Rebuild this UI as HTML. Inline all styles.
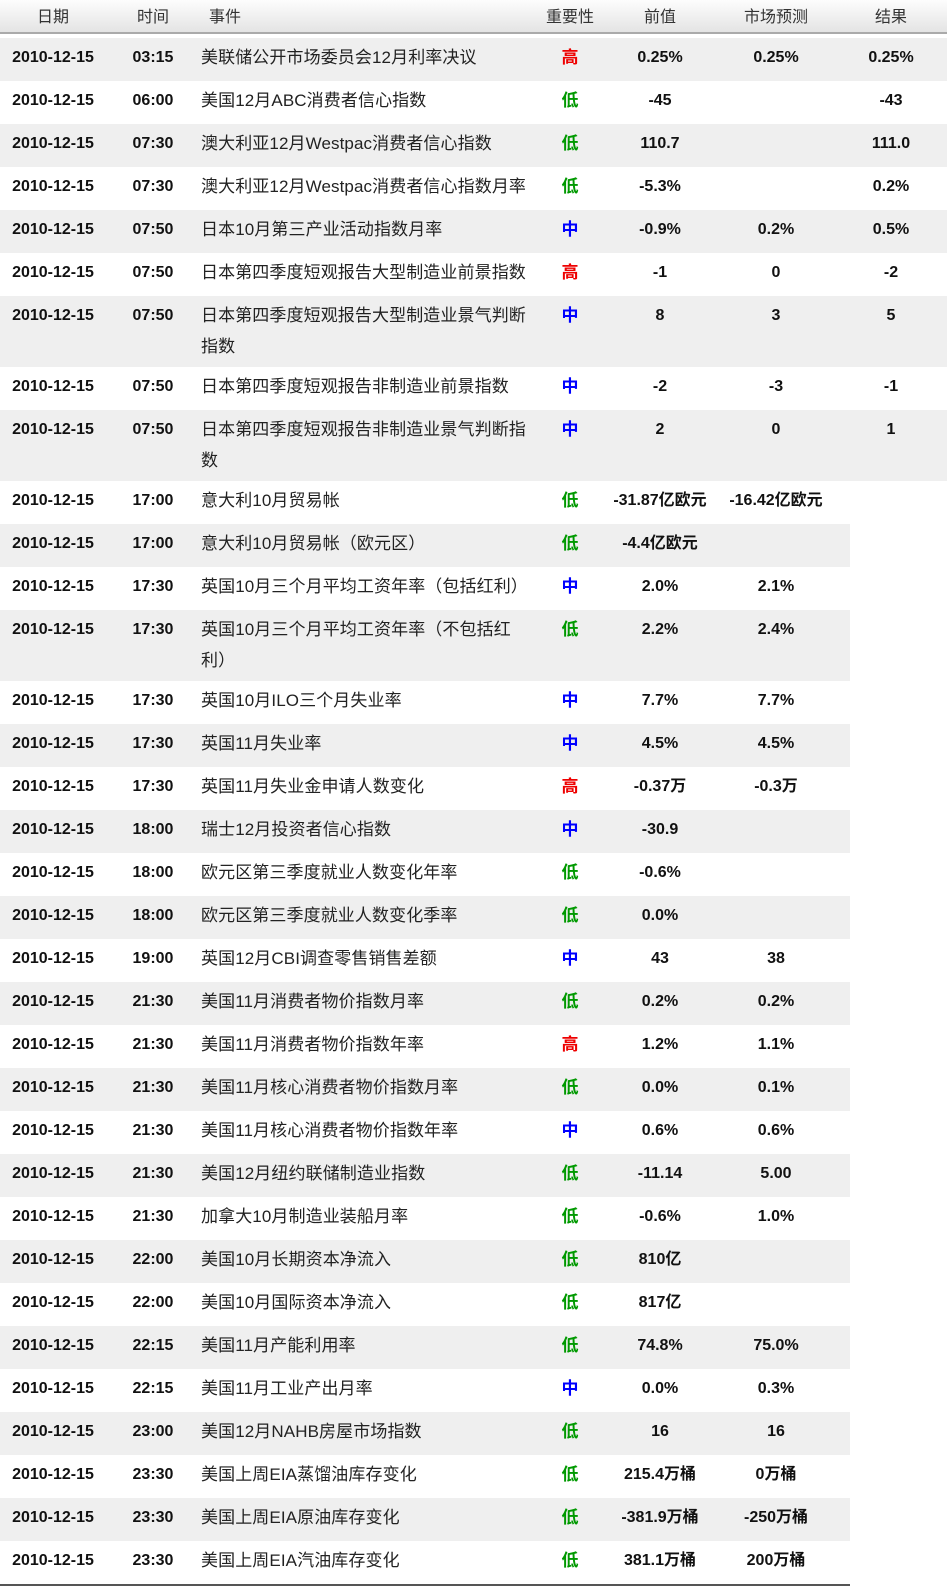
<!DOCTYPE html>
<html><head><meta charset="utf-8">
<style>
*{margin:0;padding:0;box-sizing:border-box}
body{width:947px;height:1586px;background:#fff;font-family:"Liberation Sans","Noto Sans CJK SC",sans-serif;color:#111;position:relative;overflow:hidden}
.hd{position:absolute;left:0;top:0;width:947px;height:34px;background:linear-gradient(#fdfdfd,#e4e4e4);border-bottom:2px solid #aaa;font-size:16px;color:#333}
.hd span{position:absolute;top:3px;transform:translateX(-50%);white-space:nowrap}
.r{position:absolute;left:0;width:947px;height:43px;font-size:16px}
.r.n{width:850px}
.r.g{background:#efefef}
.r.w{height:71px}
.c{position:absolute;top:4px;line-height:31px;white-space:nowrap;font-weight:bold}
.d{left:0;width:106px;text-align:center}
.t{left:106px;width:94px;text-align:center}
.e{left:201px;font-weight:normal;font-size:17px;letter-spacing:0.1px;color:#222}
.i{left:532px;width:76px;text-align:center;font-size:17px}
.p{left:608px;width:104px;text-align:center}
.f{left:712px;width:128px;text-align:center}
.s{left:840px;width:102px;text-align:center}
.H{color:#e00}.M{color:#00f}.L{color:#090}
.bl{position:absolute;left:0;top:1584px;width:850px;height:2px;background:#555}
</style></head><body>
<div class="hd">
<span style="left:53px">日期</span><span style="left:153px">时间</span><span style="left:225px">事件</span><span style="left:570px">重要性</span><span style="left:660px">前值</span><span style="left:776px">市场预测</span><span style="left:891px">结果</span>
</div>
<div class="r g" style="top:38px"><div class="c d">2010-12-15</div><div class="c t">03:15</div><div class="c e">美联储公开市场委员会12月利率决议</div><div class="c i H">高</div><div class="c p">0.25%</div><div class="c f">0.25%</div><div class="c s">0.25%</div></div>
<div class="r" style="top:81px"><div class="c d">2010-12-15</div><div class="c t">06:00</div><div class="c e">美国12月ABC消费者信心指数</div><div class="c i L">低</div><div class="c p">-45</div><div class="c f"></div><div class="c s">-43</div></div>
<div class="r g" style="top:124px"><div class="c d">2010-12-15</div><div class="c t">07:30</div><div class="c e">澳大利亚12月Westpac消费者信心指数</div><div class="c i L">低</div><div class="c p">110.7</div><div class="c f"></div><div class="c s">111.0</div></div>
<div class="r" style="top:167px"><div class="c d">2010-12-15</div><div class="c t">07:30</div><div class="c e">澳大利亚12月Westpac消费者信心指数月率</div><div class="c i L">低</div><div class="c p">-5.3%</div><div class="c f"></div><div class="c s">0.2%</div></div>
<div class="r g" style="top:210px"><div class="c d">2010-12-15</div><div class="c t">07:50</div><div class="c e">日本10月第三产业活动指数月率</div><div class="c i M">中</div><div class="c p">-0.9%</div><div class="c f">0.2%</div><div class="c s">0.5%</div></div>
<div class="r" style="top:253px"><div class="c d">2010-12-15</div><div class="c t">07:50</div><div class="c e">日本第四季度短观报告大型制造业前景指数</div><div class="c i H">高</div><div class="c p">-1</div><div class="c f">0</div><div class="c s">-2</div></div>
<div class="r g w" style="top:296px"><div class="c d">2010-12-15</div><div class="c t">07:50</div><div class="c e">日本第四季度短观报告大型制造业景气判断<br>指数</div><div class="c i M">中</div><div class="c p">8</div><div class="c f">3</div><div class="c s">5</div></div>
<div class="r" style="top:367px"><div class="c d">2010-12-15</div><div class="c t">07:50</div><div class="c e">日本第四季度短观报告非制造业前景指数</div><div class="c i M">中</div><div class="c p">-2</div><div class="c f">-3</div><div class="c s">-1</div></div>
<div class="r g w" style="top:410px"><div class="c d">2010-12-15</div><div class="c t">07:50</div><div class="c e">日本第四季度短观报告非制造业景气判断指<br>数</div><div class="c i M">中</div><div class="c p">2</div><div class="c f">0</div><div class="c s">1</div></div>
<div class="r n" style="top:481px"><div class="c d">2010-12-15</div><div class="c t">17:00</div><div class="c e">意大利10月贸易帐</div><div class="c i L">低</div><div class="c p">-31.87亿欧元</div><div class="c f">-16.42亿欧元</div></div>
<div class="r n g" style="top:524px"><div class="c d">2010-12-15</div><div class="c t">17:00</div><div class="c e">意大利10月贸易帐（欧元区）</div><div class="c i L">低</div><div class="c p">-4.4亿欧元</div></div>
<div class="r n" style="top:567px"><div class="c d">2010-12-15</div><div class="c t">17:30</div><div class="c e">英国10月三个月平均工资年率（包括红利）</div><div class="c i M">中</div><div class="c p">2.0%</div><div class="c f">2.1%</div></div>
<div class="r n g w" style="top:610px"><div class="c d">2010-12-15</div><div class="c t">17:30</div><div class="c e">英国10月三个月平均工资年率（不包括红<br>利）</div><div class="c i L">低</div><div class="c p">2.2%</div><div class="c f">2.4%</div></div>
<div class="r n" style="top:681px"><div class="c d">2010-12-15</div><div class="c t">17:30</div><div class="c e">英国10月ILO三个月失业率</div><div class="c i M">中</div><div class="c p">7.7%</div><div class="c f">7.7%</div></div>
<div class="r n g" style="top:724px"><div class="c d">2010-12-15</div><div class="c t">17:30</div><div class="c e">英国11月失业率</div><div class="c i M">中</div><div class="c p">4.5%</div><div class="c f">4.5%</div></div>
<div class="r n" style="top:767px"><div class="c d">2010-12-15</div><div class="c t">17:30</div><div class="c e">英国11月失业金申请人数变化</div><div class="c i H">高</div><div class="c p">-0.37万</div><div class="c f">-0.3万</div></div>
<div class="r n g" style="top:810px"><div class="c d">2010-12-15</div><div class="c t">18:00</div><div class="c e">瑞士12月投资者信心指数</div><div class="c i M">中</div><div class="c p">-30.9</div></div>
<div class="r n" style="top:853px"><div class="c d">2010-12-15</div><div class="c t">18:00</div><div class="c e">欧元区第三季度就业人数变化年率</div><div class="c i L">低</div><div class="c p">-0.6%</div></div>
<div class="r n g" style="top:896px"><div class="c d">2010-12-15</div><div class="c t">18:00</div><div class="c e">欧元区第三季度就业人数变化季率</div><div class="c i L">低</div><div class="c p">0.0%</div></div>
<div class="r n" style="top:939px"><div class="c d">2010-12-15</div><div class="c t">19:00</div><div class="c e">英国12月CBI调查零售销售差额</div><div class="c i M">中</div><div class="c p">43</div><div class="c f">38</div></div>
<div class="r n g" style="top:982px"><div class="c d">2010-12-15</div><div class="c t">21:30</div><div class="c e">美国11月消费者物价指数月率</div><div class="c i L">低</div><div class="c p">0.2%</div><div class="c f">0.2%</div></div>
<div class="r n" style="top:1025px"><div class="c d">2010-12-15</div><div class="c t">21:30</div><div class="c e">美国11月消费者物价指数年率</div><div class="c i H">高</div><div class="c p">1.2%</div><div class="c f">1.1%</div></div>
<div class="r n g" style="top:1068px"><div class="c d">2010-12-15</div><div class="c t">21:30</div><div class="c e">美国11月核心消费者物价指数月率</div><div class="c i L">低</div><div class="c p">0.0%</div><div class="c f">0.1%</div></div>
<div class="r n" style="top:1111px"><div class="c d">2010-12-15</div><div class="c t">21:30</div><div class="c e">美国11月核心消费者物价指数年率</div><div class="c i M">中</div><div class="c p">0.6%</div><div class="c f">0.6%</div></div>
<div class="r n g" style="top:1154px"><div class="c d">2010-12-15</div><div class="c t">21:30</div><div class="c e">美国12月纽约联储制造业指数</div><div class="c i L">低</div><div class="c p">-11.14</div><div class="c f">5.00</div></div>
<div class="r n" style="top:1197px"><div class="c d">2010-12-15</div><div class="c t">21:30</div><div class="c e">加拿大10月制造业装船月率</div><div class="c i L">低</div><div class="c p">-0.6%</div><div class="c f">1.0%</div></div>
<div class="r n g" style="top:1240px"><div class="c d">2010-12-15</div><div class="c t">22:00</div><div class="c e">美国10月长期资本净流入</div><div class="c i L">低</div><div class="c p">810亿</div></div>
<div class="r n" style="top:1283px"><div class="c d">2010-12-15</div><div class="c t">22:00</div><div class="c e">美国10月国际资本净流入</div><div class="c i L">低</div><div class="c p">817亿</div></div>
<div class="r n g" style="top:1326px"><div class="c d">2010-12-15</div><div class="c t">22:15</div><div class="c e">美国11月产能利用率</div><div class="c i L">低</div><div class="c p">74.8%</div><div class="c f">75.0%</div></div>
<div class="r n" style="top:1369px"><div class="c d">2010-12-15</div><div class="c t">22:15</div><div class="c e">美国11月工业产出月率</div><div class="c i M">中</div><div class="c p">0.0%</div><div class="c f">0.3%</div></div>
<div class="r n g" style="top:1412px"><div class="c d">2010-12-15</div><div class="c t">23:00</div><div class="c e">美国12月NAHB房屋市场指数</div><div class="c i L">低</div><div class="c p">16</div><div class="c f">16</div></div>
<div class="r n" style="top:1455px"><div class="c d">2010-12-15</div><div class="c t">23:30</div><div class="c e">美国上周EIA蒸馏油库存变化</div><div class="c i L">低</div><div class="c p">215.4万桶</div><div class="c f">0万桶</div></div>
<div class="r n g" style="top:1498px"><div class="c d">2010-12-15</div><div class="c t">23:30</div><div class="c e">美国上周EIA原油库存变化</div><div class="c i L">低</div><div class="c p">-381.9万桶</div><div class="c f">-250万桶</div></div>
<div class="r n" style="top:1541px"><div class="c d">2010-12-15</div><div class="c t">23:30</div><div class="c e">美国上周EIA汽油库存变化</div><div class="c i L">低</div><div class="c p">381.1万桶</div><div class="c f">200万桶</div></div>
<div class="bl"></div>
</body></html>
